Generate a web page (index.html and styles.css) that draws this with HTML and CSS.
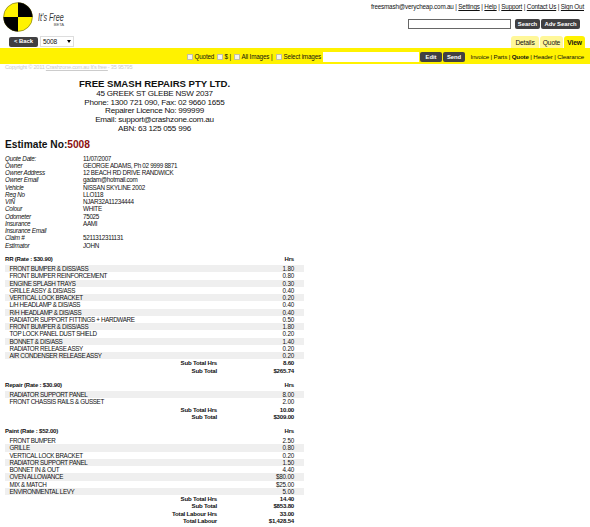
FILE: index.html
```html
<!DOCTYPE html>
<html lang="en">
<head>
<meta charset="utf-8">
<title>Estimate 5008</title>
<link rel="stylesheet" href="styles.css">
</head>
<body>
<header class="top">
  <div class="brand-col">
    <div class="brand">
      <svg class="logo" viewBox="0 0 30 30"><circle cx="15" cy="15" r="14.6" fill="#fff200"/><path d="M15 15V.4A14.6 14.6 0 0 1 29.6 15ZM15 15V29.6A14.6 14.6 0 0 1 .4 15Z" fill="#000"/><circle cx="15" cy="15" r="14.4" fill="none" stroke="#222" stroke-width=".4"/></svg>
      <div class="tagline"><span class="free">It's Free</span><span class="beta">BETA</span></div>
    </div>
    <div class="picker"><button class="btn back">&lt; Back</button><div class="select"><span>5008</span><i class="caret"></i></div></div>
  </div>
  <div class="tools">
    <div class="account">freesmash@verycheap.com.au | <a>Settings</a> | <a>Help</a> | <a>Support</a> | <a>Contact Us</a> | <a>Sign Out</a></div>
    <div class="search"><input class="query"><button class="btn find">Search</button><button class="btn adv">Adv Search</button></div>
    <nav class="tabs"><a class="tab details">Details</a><a class="tab quote">Quote</a><a class="tab active">View</a></nav>
  </div>
</header>
<div class="bar">
  <div class="checks"><i class="box"></i><span class="c1">Quoted</span><i class="box"></i><span class="c2">$ |</span><i class="box"></i><span class="c3">All Images |</span><i class="box"></i><span class="c4">Select images</span></div>
  <input class="mail"><button class="btn edit">Edit</button><button class="btn send">Send</button>
  <div class="views">Invoice | Parts | <b>Quote</b> | Header | Clearance</div>
</div>
<div class="copyright">Copyright © 2011 <a>Crashzone.com.au It's free </a>- 35 95795</div>
<main class="sheet">
  <div class="company">
    <h1>FREE SMASH REPAIRS PTY LTD.</h1>
    <div>45 GREEK ST GLEBE NSW 2037</div>
    <div>Phone: 1300 721 090, Fax: 02 9660 1655</div>
    <div>Repairer Licence No: 999999</div>
    <div>Email: support@crashzone.com.au</div>
    <div>ABN: 63 125 055 996</div>
  </div>
  <h2>Estimate No:<span>5008</span></h2>
  <dl class="info">
    <dt>Quote Date:</dt><dd>11/07/2007</dd>
    <dt>Owner</dt><dd>GEORGE ADAMS, Ph 02 9999 8871</dd>
    <dt>Owner Address</dt><dd>12 BEACH RD DRIVE RANDWICK</dd>
    <dt>Owner Email</dt><dd>gadam@hotmail.com</dd>
    <dt>Vehicle</dt><dd>NISSAN SKYLINE 2002</dd>
    <dt>Reg No</dt><dd>LLO118</dd>
    <dt>VIN</dt><dd>NJAR32A11234444</dd>
    <dt>Colour</dt><dd>WHITE</dd>
    <dt>Odometer</dt><dd>75025</dd>
    <dt>Insurance</dt><dd>AAMI</dd>
    <dt>Insurance Email</dt><dd></dd>
    <dt>Claim #</dt><dd>5211312311131</dd>
    <dt>Estimator</dt><dd>JOHN</dd>
  </dl>
  <section class="group">
    <h3><span>RR (Rate : $30.90)</span><span>Hrs</span></h3>
    <div class="row alt"><span>FRONT BUMPER &amp; DISS/ASS</span><span>1.80</span></div>
    <div class="row"><span>FRONT BUMPER REINFORCEMENT</span><span>0.80</span></div>
    <div class="row alt"><span>ENGINE SPLASH TRAYS</span><span>0.30</span></div>
    <div class="row"><span>GRILLE ASSY &amp; DIS/ASS</span><span>0.40</span></div>
    <div class="row alt"><span>VERTICAL LOCK BRACKET</span><span>0.20</span></div>
    <div class="row"><span>L/H HEADLAMP &amp; DIS/ASS</span><span>0.40</span></div>
    <div class="row alt"><span>R/H HEADLAMP &amp; DIS/ASS</span><span>0.40</span></div>
    <div class="row"><span>RADIATOR SUPPORT FITTINGS + HARDWARE</span><span>0.50</span></div>
    <div class="row alt"><span>FRONT BUMPER &amp; DISS/ASS</span><span>1.80</span></div>
    <div class="row"><span>TOP LOCK PANEL DUST SHIELD</span><span>0.20</span></div>
    <div class="row alt"><span>BONNET &amp; DIS/ASS</span><span>1.40</span></div>
    <div class="row"><span>RADIATOR RELEASE ASSY</span><span>0.20</span></div>
    <div class="row alt"><span>AIR CONDENSER RELEASE ASSY</span><span>0.20</span></div>
    <div class="total"><span>Sub Total Hrs</span><span>8.60</span></div>
    <div class="total"><span>Sub Total</span><span>$265.74</span></div>
  </section>
  <section class="group">
    <h3><span>Repair (Rate : $30.90)</span><span>Hrs</span></h3>
    <div class="row alt"><span>RADIATOR SUPPORT PANEL</span><span>8.00</span></div>
    <div class="row"><span>FRONT CHASSIS RAILS &amp; GUSSET</span><span>2.00</span></div>
    <div class="total"><span>Sub Total Hrs</span><span>10.00</span></div>
    <div class="total"><span>Sub Total</span><span>$309.00</span></div>
  </section>
  <section class="group">
    <h3><span>Paint (Rate : $52.00)</span><span>Hrs</span></h3>
    <div class="row"><span>FRONT BUMPER</span><span>2.50</span></div>
    <div class="row alt"><span>GRILLE</span><span>0.80</span></div>
    <div class="row"><span>VERTICAL LOCK BRACKET</span><span>0.20</span></div>
    <div class="row alt"><span>RADIATOR SUPPORT PANEL</span><span>1.50</span></div>
    <div class="row"><span>BONNET IN &amp; OUT</span><span>4.40</span></div>
    <div class="row alt"><span>OVEN ALLOWANCE</span><span>$80.00</span></div>
    <div class="row"><span>MIX &amp; MATCH</span><span>$25.00</span></div>
    <div class="row alt"><span>ENVIRONMENTAL LEVY</span><span>5.00</span></div>
    <div class="total"><span>Sub Total Hrs</span><span>14.40</span></div>
    <div class="total"><span>Sub Total</span><span>$853.80</span></div>
    <div class="total"><span>Total Labour Hrs</span><span>33.00</span></div>
    <div class="total"><span>Total Labour</span><span>$1,428.54</span></div>
  </section>
</main>
</body>
</html>
```
FILE: styles.css
```css
* { box-sizing: border-box; }
body { margin: 0; height: 527px; overflow: hidden; background: #fff; color: #111; font: 6.3px/7.25px "Liberation Sans", Arial, sans-serif; letter-spacing: -.36px; white-space: nowrap; }
h1, h2, h3, dl, dd { margin: 0; }
a { text-decoration: underline; }
.btn { border: 0; padding: 0; border-radius: 2px; background: #414042; color: #fff; font: bold 5.9px/9px "Liberation Sans", Arial, sans-serif; letter-spacing: -.05px; height: 10px; }
.top { display: flex; justify-content: space-between; height: 48px; }
.brand-col { padding: 2px 0 0 3px; }
.brand { display: flex; height: 34px; }
.logo { width: 30px; height: 30px; }
.tagline { width: 33px; margin-left: 5px; padding-top: 10px; display: flex; flex-direction: column; }
.free { font: italic 10px/11px "Liberation Sans Narrow", "Liberation Sans", sans-serif; letter-spacing: 0; color: #333; transform: scaleX(.72); transform-origin: left; }
.beta { font-size: 4.2px; line-height: 4px; letter-spacing: -.1px; text-align: right; padding-right: 7px; color: #555; }
.picker { display: flex; align-items: center; gap: 2px; padding-left: 6px; height: 11px; }
.back { width: 29px; }
.select { display: flex; justify-content: space-between; align-items: center; width: 34px; height: 11px; border: 1px solid #ddd; padding: 0 2px; font-size: 6.6px; letter-spacing: -.15px; }
.caret { border: 2.5px solid transparent; border-top: 3px solid #000; border-bottom: 0; }
.tools { display: flex; flex-direction: column; align-items: flex-end; }
.account { font-size: 6.3px; letter-spacing: -.17px; padding: 3px 6px 0 0; height: 19px; line-height: 8px; }
.search { display: flex; align-items: center; height: 10px; padding-right: 10px; }
.query { width: 103px; height: 10px; border: 1px solid #666; margin: 0 4px 0 0; padding: 0; }
.find { width: 25px; margin-right: 1px; }
.adv { width: 39px; }
.tabs { display: flex; margin-top: 7px; padding-right: 5px; height: 12px; gap: 1px; font-size: 6.7px; letter-spacing: -.18px; line-height: 14px; text-align: center; }
.tab { background: #fff799; border-radius: 3px 3px 0 0; text-decoration: none; }
.details { width: 28px; }
.quote { width: 23px; }
.active { width: 21px; background: #fff200; font-weight: bold; }
.bar { display: flex; align-items: center; height: 16px; background: #fff200; padding: 2px 6px 0 187px; }
.checks { display: flex; align-items: center; width: 136px; letter-spacing: -.16px; }
.box { flex: none; width: 6px; height: 6px; background: #f4f4ec; border: 1px solid #c4c0a0; margin-right: 1.5px; }
.c1 { width: 22.5px; } .c2 { width: 9.5px; } .c3 { width: 34.5px; }
.mail { width: 96px; height: 10px; border: 0; padding: 0; background: #fff; margin: 0 1px 0 0; }
.edit { width: 22px; margin-right: 1px; }
.send { width: 22px; }
.views { margin-left: auto; font-size: 6.2px; letter-spacing: -.16px; }
.copyright { height: 13.5px; padding: 0 5px; line-height: 7px; font-size: 5.6px; letter-spacing: -.23px; color: #ccc; }
.sheet { width: 299px; margin-left: 5px; }
.company { text-align: center; font-size: 8.1px; letter-spacing: -.24px; line-height: 8.65px; }
.company h1 { font-size: 9.6px; letter-spacing: -.03px; line-height: 12.5px; }
h2 { font-size: 10.2px; letter-spacing: 0; line-height: 12px; margin-top: 6px; height: 15.4px; }
h2 span { color: #8b1010; }
.info { display: grid; grid-template-columns: 78px 1fr; grid-auto-rows: 7.25px; height: 99.5px; }
.info dt { font-style: italic; letter-spacing: -.26px; }
.info dd { letter-spacing: -.3px; }
.group { margin-bottom: 6.1px; }
.group h3 { display: flex; justify-content: space-between; height: 11px; padding: 2px 10px 0 0; font-size: 6px; letter-spacing: -.19px; line-height: 7.8px; }
.row { display: flex; justify-content: space-between; height: 7.25px; padding: 0 10px 0 4.5px; }
.row span:last-child { letter-spacing: -.2px; }
.alt { background: #efefef; }
.total { display: grid; grid-template-columns: 212px 77px; height: 7.25px; font-weight: bold; font-size: 6.1px; letter-spacing: -.21px; line-height: 8.6px; text-align: right; }
```
